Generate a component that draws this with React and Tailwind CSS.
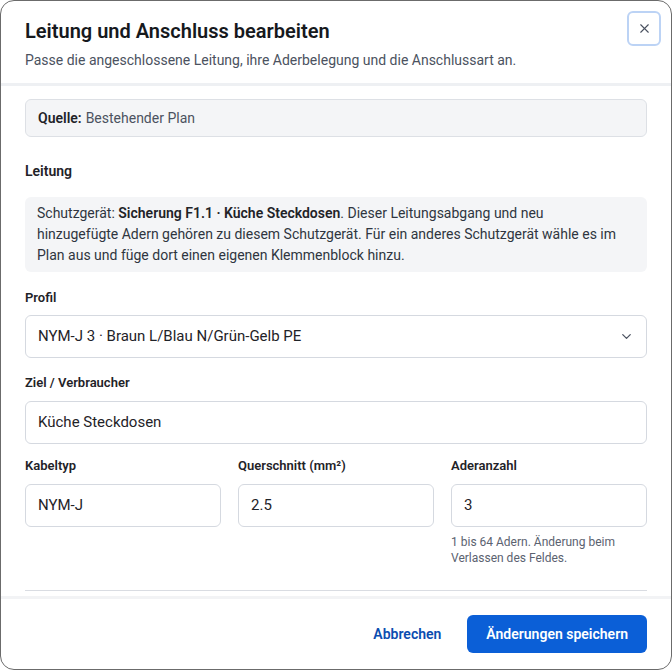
import React from 'react'
import { X, ChevronDown } from 'lucide-react'

const FONT = { fontFamily: 'Roboto, "Noto Sans", sans-serif' }

function Field({ label, value, hint }) {
  return (
    <div className="flex flex-col">
      <label className="text-[13px] font-semibold text-[#1f2328] mb-[8px] leading-5">{label}</label>
      <div className="h-[43px] flex items-center px-3 border border-[#d5d9e0] rounded-md text-[15px] text-[#1f2328] bg-white">
        {value}
      </div>
      {hint && <p className="mt-[7px] text-xs leading-4 text-[#5b6270]">{hint}</p>}
    </div>
  )
}

export default function App() {
  return (
    <div className="w-[672px] h-[670px] bg-white" style={FONT}>
      <div className="w-full h-full flex flex-col bg-white border border-[#6b6b6b] rounded-[14px] overflow-hidden">
        {/* Header */}
        <div className="relative px-6 pt-[16px] pb-[13px] border-b-[3px] border-[#eef0f3]">
          <h2 className="text-xl font-semibold text-[#16191d] leading-7">Leitung und Anschluss bearbeiten</h2>
          <p className="mt-[5px] text-sm text-[#4b5260] leading-5">
            Passe die angeschlossene Leitung, ihre Aderbelegung und die Anschlussart an.
          </p>
          <button className="absolute right-[10px] top-[10px] w-[34px] h-[35px] flex items-center justify-center rounded-md border-2 border-[#bcd3f5] text-[#4b5260]">
            <X size={15} strokeWidth={1.8} />
          </button>
        </div>

        {/* Body */}
        <div className="flex-1 overflow-hidden px-6 pt-[13px]">
          <div className="h-[38px] flex items-center px-3 rounded-md bg-[#f4f5f7] border border-[#dde0e5] text-sm text-[#4b5260]">
            <span className="font-semibold text-[#1f2328] mr-1">Quelle:</span> Bestehender Plan
          </div>

          <h3 className="mt-[24px] text-sm font-semibold text-[#1f2328] leading-5">Leitung</h3>

          <div className="mt-[16px] px-3 py-[6px] rounded-md bg-[#f4f5f7] text-sm leading-[21px] text-[#2f3540]">
            Schutzgerät: <span className="font-semibold text-[#1f2328]">Sicherung F1.1 · Küche Steckdosen</span>. Dieser Leitungsabgang und neu
            <br />
            hinzugefügte Adern gehören zu diesem Schutzgerät. Für ein anderes Schutzgerät wähle es im
            <br />
            Plan aus und füge dort einen eigenen Klemmenblock hinzu.
          </div>

          <div className="mt-[16px] flex flex-col">
            <label className="text-[13px] font-semibold text-[#1f2328] mb-[7px] leading-5">Profil</label>
            <div className="h-[43px] flex items-center justify-between px-3 border border-[#d5d9e0] rounded-md text-[15px] text-[#1f2328] bg-white">
              <span>NYM-J 3 · Braun L/Blau N/Grün-Gelb PE</span>
              <ChevronDown size={15} className="text-[#4b5260]" />
            </div>
          </div>

          <div className="mt-[15px]">
            <Field label="Ziel / Verbraucher" value="Küche Steckdosen" />
          </div>

          <div className="mt-[12px] grid grid-cols-3 gap-[17px]">
            <Field label="Kabeltyp" value="NYM-J" />
            <Field label="Querschnitt (mm²)" value="2.5" />
            <Field label="Aderanzahl" value="3" hint="1 bis 64 Adern. Änderung beim Verlassen des Feldes." />
          </div>

          <div className="mt-[24px] border-t border-[#d9dce2]" />
          <div className="h-10" />
        </div>

        {/* Footer */}
        <div className="flex items-center justify-end gap-[26px] px-6 pt-[16px] pb-[16px] border-t-[3px] border-[#f2f3f5]">
          <button className="text-sm font-semibold text-[#0b4db0]">Abbrechen</button>
          <button className="h-[38px] px-[19px] rounded-md bg-[#0b5fd7] text-sm font-semibold text-white">
            Änderungen speichern
          </button>
        </div>
      </div>
    </div>
  )
}
